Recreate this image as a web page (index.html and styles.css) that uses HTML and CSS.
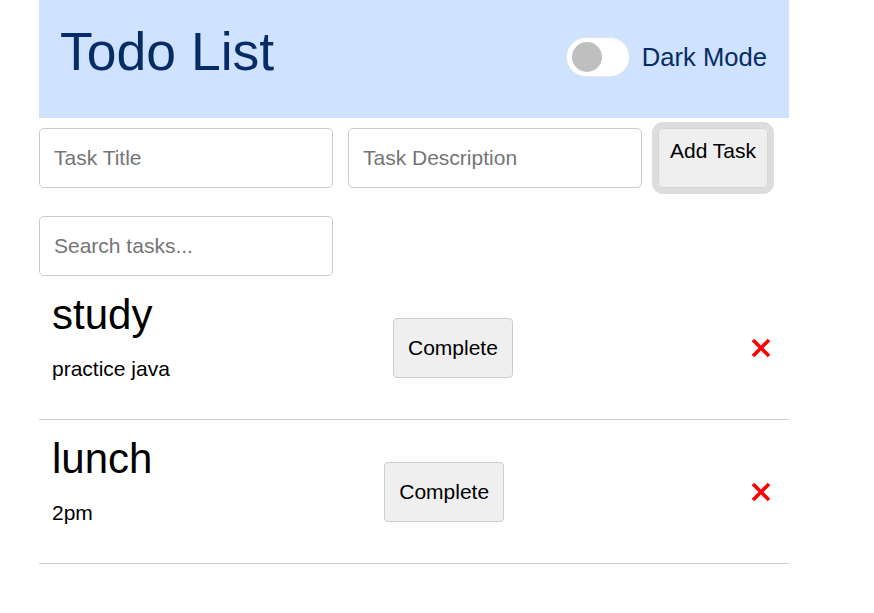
FILE: index.html
```html
<!DOCTYPE html>
<html lang="en">
<head>
<meta charset="utf-8">
<title>Todo List</title>
<link rel="stylesheet" href="styles.css">
</head>
<body>
<div class="app">
  <header class="header">
    <h1 class="title">Todo List</h1>
    <div class="mode">
      <span class="toggle"><span class="knob"></span></span>
      <span class="mode-label">Dark Mode</span>
    </div>
  </header>
  <div class="form-row">
    <input class="field" type="text" placeholder="Task Title">
    <input class="field" type="text" placeholder="Task Description">
    <button class="add-btn" type="button">Add Task</button>
  </div>
  <div class="search-row">
    <input class="field" type="text" placeholder="Search tasks...">
  </div>
  <ul class="tasks">
    <li class="task">
      <div class="task-text">
        <h3 class="task-title">study</h3>
        <p class="task-desc">practice java</p>
      </div>
      <button class="complete-btn" type="button">Complete</button>
      <span class="delete"><svg width="20" height="20" viewBox="0 0 20 20"><path d="M2 2 L18 18 M18 2 L2 18" stroke="#ff0000" stroke-width="3.6" fill="none"/></svg></span>
    </li>
    <li class="task">
      <div class="task-text">
        <h3 class="task-title">lunch</h3>
        <p class="task-desc">2pm</p>
      </div>
      <button class="complete-btn" type="button">Complete</button>
      <span class="delete"><svg width="20" height="20" viewBox="0 0 20 20"><path d="M2 2 L18 18 M18 2 L2 18" stroke="#ff0000" stroke-width="3.6" fill="none"/></svg></span>
    </li>
  </ul>
</div>
</body>
</html>
```
FILE: styles.css
```css
* { box-sizing: border-box; }
body {
  margin: 0;
  background: #ffffff;
  font-family: "Liberation Sans", Arial, sans-serif;
  color: #000;
}
.app {
  width: 750px;
  margin-left: 39px;
}
.header {
  height: 118px;
  background: #cfe2ff;
  padding: 0 22px 0 21px;
  display: flex;
  align-items: center;
  justify-content: space-between;
}
.title {
  margin: 0 0 14px 0;
  font-size: 53.5px;
  line-height: 60px;
  font-weight: normal;
  color: #052c65;
}
.mode {
  display: flex;
  align-items: center;
  gap: 12px;
  margin-bottom: 5px;
}
.toggle {
  width: 64px;
  height: 40px;
  border-radius: 20px;
  background: #ffffff;
  border: 1px solid #e2e6ec;
  display: flex;
  align-items: center;
  padding-left: 5px;
}
.knob {
  width: 30px;
  height: 30px;
  border-radius: 50%;
  background: #bfbfbf;
}
.mode-label {
  font-size: 25.6px;
  line-height: 30px;
  color: #052c65;
}
.form-row {
  display: flex;
  gap: 15px;
  margin-top: 10px;
  align-items: flex-start;
}
.field {
  width: 294px;
  height: 60px;
  border: 1px solid #cccccc;
  border-radius: 5px;
  padding: 0 14px;
  font-family: "Liberation Sans", Arial, sans-serif;
  font-size: 21px;
  color: #000;
  background: #fff;
}
.field::placeholder { color: #757575; }
.add-btn {
  width: 110px;
  height: 60px;
  margin-left: 1px;
  background: #efefef;
  border: 1px solid #d4d4d4;
  border-radius: 5px;
  outline: 6px solid #dcdddf;
  font-family: "Liberation Sans", Arial, sans-serif;
  font-size: 21px;
  color: #000;
  display: flex;
  align-items: flex-start;
  justify-content: center;
  padding: 10px 0 0 0;
  line-height: 24px;
}
.search-row {
  margin-top: 28px;
}
.tasks {
  list-style: none;
  margin: 0;
  padding: 0;
}
.task {
  display: flex;
  align-items: center;
  justify-content: space-between;
  padding: 0 18px 0 13px;
  border-bottom: 1px solid #cccccc;
}
.task-text {
  padding: 15px 0 38px 0;
}
.task-title {
  margin: 0 0 18px 0;
  font-size: 42px;
  line-height: 48px;
  font-weight: normal;
}
.task-desc {
  margin: 0;
  font-size: 21px;
  line-height: 24px;
}
.complete-btn {
  width: 120px;
  height: 60px;
  background: #efefef;
  border: 1px solid #cccccc;
  border-radius: 4px;
  font-family: "Liberation Sans", Arial, sans-serif;
  font-size: 21px;
  color: #000;
  padding: 0;
}
.delete {
  display: flex;
  padding-left: 15px;
}
```
